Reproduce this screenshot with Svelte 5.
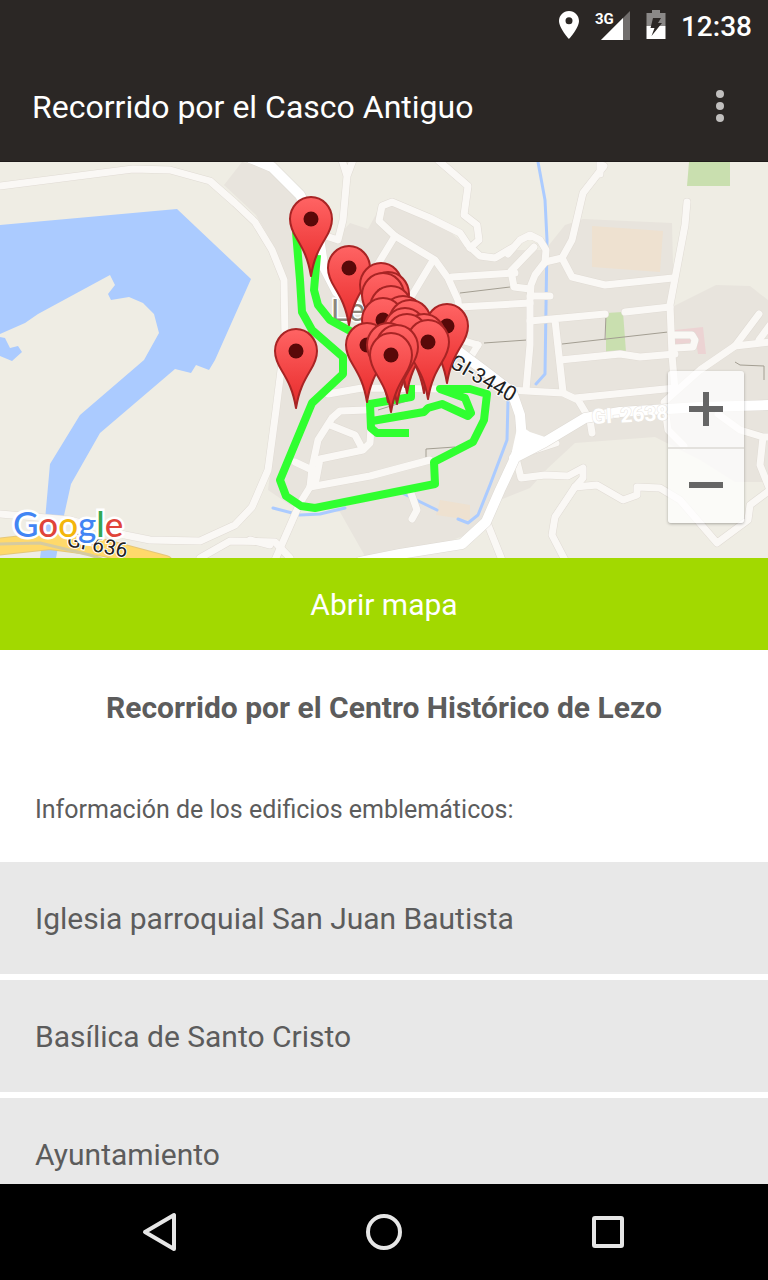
<script lang="ts">
	type Place = { id: number; name: string };

	const places: Place[] = [
		{ id: 1, name: 'Iglesia parroquial San Juan Bautista' },
		{ id: 2, name: 'Basílica de Santo Cristo' },
		{ id: 3, name: 'Ayuntamiento' }
	];

	// centre of each marker head, drawn back to front
	const markers = [
		[311, 219], [349, 268], [381, 285], [388, 294], [383, 295], [391, 308],
		[403, 318], [383, 320], [410, 322], [447, 326], [405, 330], [424, 336],
		[407, 336], [428, 342], [367, 345], [388, 345], [397, 347], [391, 355],
		[296, 351]
	];

	const roads = [
		'M0 186L133 169L170 170L210 181L235 203L255 222L272 250L284 280L285 340L281 370L276 410L268 470L252 507L235 525L200 541L150 540L125 535L70 520L0 514',
		'M290 558L275 542L230 541L200 558',
		'M342 160L347 176L343 220L338 240L326 236M353 160L347 176',
		'M438 160L468 186L464 215L477 225L479 240L470 248',
		'M512 248L495 258L480 256L468 245L460 233L430 218L392 202L382 206L379 221L395 236L435 260L448 278L458 300L461 340L478 345',
		'M395 236L378 264M432 262L408 302M452 277L515 273M460 307L530 303',
		'M478 345L470 358L450 350',
		'M508 254L520 240L530 235L540 240L546 250L545 262L535 275L531 285L530 300L530 345L526 390',
		'M534 247L511 271L514 287L530 289M530 296L550 296',
		'M545 262L562 258L572 240L583 193L604 166M600 174L600 158',
		'M562 258L572 277L605 285L673 278',
		'M687 202L685 225L670 305L672 355L675 390',
		'M530 321L605 314M625 312L670 307M555 320L560 365L563 392',
		'M560 360L620 354L640 357L675 354',
		'M675 335L692 335L695 340L693 347L675 348',
		'M770 342L735 346L700 370L664 402L668 430L684 446',
		'M735 346L759 314M759 340L770 325',
		'M508 390L563 393L578 400L590 420L592 433M575 398L675 388',
		'M516 458L521 478L545 475L568 476L583 468L583 478L575 487L555 517L552 535L565 560',
		'M575 487L597 485L623 500L637 495L637 487L660 488L680 500L717 543L748 520L750 505L770 490L760 465L763 437L740 430L718 414M763 437L770 437',
		'M516 456L556 443',
		'M366 410L340 411L332 418L318 440L312 468L310 487L300 503L275 560',
		'M330 425L355 435L363 450M371 428L370 443L363 450L320 459L316 480',
		'M310 487L370 476L430 460M295 462L312 470M328 394L362 388L440 389',
		'M411 493L417 510L412 519M488 525L502 560M270 545L250 540'
	];

	const highway =
		'M250 158L272 167L300 195L318 230L323 265L337 292L370 315L450 345L490 375L512 392L520 415L522 440L514 460L500 490L486 522L462 544L400 554L360 562M514 458L545 442L585 418L620 412L700 407L770 405';

	const route =
		'M296 232L300 280L302 312L312 330L343 357L343 374L312 403L280 480L286 496L301 506L315 508L435 484L434 462L473 442L484 420L487 394L470 389L440 389L465 398L471 413L468 416L442 404L428 408L424 412L372 421M411 385L411 397L370 404L371 428L377 433L409 433M317 255L314 290L318 305L330 320L352 332';

	let zoom = $state(1);

	function zoomIn() {
		zoom = Math.min(zoom + 1, 4);
	}

	function zoomOut() {
		zoom = Math.max(zoom - 1, 1);
	}
</script>

<div class="screen">
	<div class="status-bar">
		<svg width="20" height="30" viewBox="1 0 20 30" aria-hidden="true">
			<path fill="#fff" fill-rule="evenodd" d="M11 1C5.300 1 1 5.500 1 11C1 18 11 29 11 29S21 18 21 11C21 5.500 16.700 1 11 1ZM11 7.300A3.500 3.500 0 1 1 11 14.300A3.500 3.500 0 1 1 11 7.300Z" />
		</svg>
		<svg class="signal" width="37" height="30" viewBox="0 0 37 30" aria-hidden="true">
			<path fill="#716e6d" d="M36 1V30H7Z" />
			<path fill="#fff" d="M29 8V30H7Z" />
			<text x="1" y="14">3G</text>
		</svg>
		<svg width="20" height="30" viewBox="0 0 20 30" aria-hidden="true">
			<path fill="#8b8988" d="M6 0H14V3H19.500V16H0.500V3H6Z" />
			<path fill="#fff" d="M0.500 16H19.500V29H0.500Z" />
			<path fill="#2b2725" d="M7 8H15L12 13H16L5.500 26L8.500 18H4.500Z" />
		</svg>
		<time>12:38</time>
	</div>

	<header>
		<h1>Recorrido por el Casco Antiguo</h1>
		<button class="menu" aria-label="Más opciones">
			<svg width="10" height="34" viewBox="0 0 10 34">
				<circle cx="5" cy="5" r="4" />
				<circle cx="5" cy="17" r="4" />
				<circle cx="5" cy="29" r="4" />
			</svg>
		</button>
	</header>

	<main>
		<div class="map">
			<svg class="map-canvas" viewBox="0 162 768 396" preserveAspectRatio="xMidYMid slice" style:transform="scale({zoom})">
				<defs>
					<linearGradient id="pin-fill" x1="0" y1="0" x2="0" y2="1">
						<stop offset="0" stop-color="#ff6464" />
						<stop offset="0.700" stop-color="#ef3b3b" />
						<stop offset="1" stop-color="#e02c2c" />
					</linearGradient>
				</defs>
				<rect y="162" width="768" height="396" fill="#efede4" />

				<!-- built-up areas -->
				<path fill="#e8e4dd" d="M242 162L224 185L256 215L276 250L286 300L282 380L268 490L290 505L340 512L366 558L430 548L480 530L500 500L530 488L548 468L575 443L655 437L700 460L735 482L768 482V300L750 286L716 285L674 306L672 223L583 219L565 225L545 250L510 250L490 258L470 250L440 222L400 203L380 207L368 229L350 223L335 240L300 195L270 170Z" />
				<path fill="#eee1d0" d="M592 226L663 231L660 272L592 267ZM440 500L470 505L470 520L436 515Z" />
				<path fill="#c9dfaf" d="M689 162H730V186H687ZM606 313L623 312L626 352L606 354Z" />
				<path fill="#ecd3d3" d="M675 330L703 327L706 354L698 354L696 342L675 345Z" />

				<!-- water -->
				<path fill="#abcbff" d="M0 225L177 209L251 279L215 360L209 370L196 365L191 373L175 369L100 433L71 484L63 520L56 558H40L45 520L50 464L80 415L144 360L159 333L154 314L143 303L129 297L111 300L108 294L115 285L110 275L38 314L25 323L0 334ZM0 337L5 338L10 348L18 346L22 352L12 361L0 356Z" />
				<path class="stream" d="M538 162L545 200L547 240L545 374L536 384M508 400L507 440L490 485L478 515L468 523L458 519M273 508L300 515L320 514L345 508M400 492L437 510" />

				<path class="footpath" d="M460 293L510 287M484 343L527 340M562 344L668 332M606 314L605 340M378 410L410 400M426 458V449L455 447M735 362L740 365L764 366V380" />

				{#each roads as road}
					<path class="road-edge" d={road} />
				{/each}
				{#each roads as road}
					<path class="road" d={road} />
				{/each}
				<path class="highway-edge" d={highway} />
				<path class="highway" d={highway} />
				<path fill="#fff" d="M518 424L530 432L545 437L536 450L510 460Z" />

				<path class="motorway-edge" d="M-5 547L50 541L105 548L165 564" />
				<path class="motorway" d="M-5 547L50 541L105 548L165 564" />
				<path fill="none" stroke="#d6cba0" stroke-width="3" d="M0 544L40 543L90 555L110 562" />

				<text class="town" x="331" y="321">Lezo</text>
				<text class="road-label white" x="592" y="424" transform="rotate(-3 592 424)">GI-2638</text>
				<text class="road-label" x="448" y="366" transform="rotate(30 448 366)">GI-3440</text>
				<text class="road-label" x="66" y="546" transform="rotate(11 66 546)">GI-636</text>

				<path class="route" d={route} />

				{#each markers as [x, y]}
					<g transform="translate({x} {y})">
						<path class="pin" d="M0 57C-3 39 -8 30 -14 20C-19 12 -21 7 -21 0A21 22 0 1 1 21 0C21 7 19 12 14 20C8 30 3 39 0 57Z" />
						<circle r="7.500" fill="#590909" />
					</g>
				{/each}
			</svg>

			<div class="google">
				<span class="blue">G</span><span class="red">o</span><span class="yellow">o</span><span class="blue">g</span><span class="green">l</span><span class="red">e</span>
			</div>

			<div class="zoom">
				<button aria-label="Acercar" onclick={zoomIn}>
					<svg width="34" height="34" viewBox="0 0 34 34"><path d="M14 0H20V14H34V20H20V34H14V20H0V14H14Z" /></svg>
				</button>
				<button aria-label="Alejar" onclick={zoomOut}>
					<svg width="34" height="34" viewBox="0 0 34 34"><path d="M0 14H34V20H0Z" /></svg>
				</button>
			</div>
		</div>

		<button class="open-map">Abrir mapa</button>

		<h2>Recorrido por el Centro Histórico de Lezo</h2>
		<p>Información de los edificios emblemáticos:</p>

		<ul>
			{#each places as place (place.id)}
				<li><button class="place">{place.name}</button></li>
			{/each}
		</ul>
	</main>

	<nav aria-label="Sistema">
		<button aria-label="Atrás">
			<svg width="40" height="40" viewBox="0 0 40 40"><path d="M34 3V37L5 20Z" /></svg>
		</button>
		<button aria-label="Inicio">
			<svg width="40" height="40" viewBox="0 0 40 40"><circle cx="20" cy="20" r="16" /></svg>
		</button>
		<button aria-label="Recientes">
			<svg width="40" height="40" viewBox="0 0 40 40"><rect x="6" y="6" width="28" height="28" rx="1" /></svg>
		</button>
	</nav>
</div>

<style>
	:global(body) {
		margin: 0;
	}

	.screen {
		display: flex;
		flex-direction: column;
		height: 100vh;
		font-family: Roboto, 'Liberation Sans', sans-serif;
		color: #5c5c5c;
		background-color: white;
	}

	button {
		padding: 0;
		border: none;
		background: none;
		font-family: inherit;
		color: inherit;
		cursor: pointer;
	}

	svg {
		display: block;
	}

	.status-bar {
		display: flex;
		flex-shrink: 0;
		justify-content: flex-end;
		align-items: center;
		gap: 15px;
		height: 50px;
		padding: 0 16px;
		background-color: #2b2725;
		color: white;
	}

	.signal {
		overflow: visible;
	}

	.signal text {
		font-size: 15px;
		font-weight: 700;
		fill: white;
		stroke: #2b2725;
		stroke-width: 2px;
		paint-order: stroke;
	}

	time {
		padding-top: 4px;
		font-size: 28px;
		font-weight: 500;
		line-height: 32px;
	}

	header {
		display: flex;
		flex-shrink: 0;
		justify-content: space-between;
		align-items: center;
		height: 112px;
		padding: 0 32px;
		box-sizing: border-box;
		border-bottom: 1px solid #1f1b1a;
		background-color: #2b2725;
		color: white;
	}

	h1 {
		margin: 0;
		padding-top: 2px;
		font-size: 32px;
		font-weight: 400;
		line-height: 40px;
	}

	.menu {
		display: flex;
		justify-content: center;
		width: 32px;
		fill: #c1bfbe;
	}

	main {
		flex: 1;
		min-height: 0;
		overflow: hidden;
	}

	.map {
		position: relative;
		height: 396px;
		overflow: hidden;
	}

	.map-canvas {
		width: 100%;
		height: 100%;
	}

	.map-canvas path {
		stroke-linejoin: round;
	}

	.road-edge,
	.road,
	.highway-edge,
	.highway,
	.motorway-edge,
	.motorway,
	.stream,
	.route {
		fill: none;
		stroke-linecap: round;
	}

	.road-edge {
		stroke: #e0dbd4;
		stroke-width: 8px;
	}

	.road {
		stroke: #faf8f5;
		stroke-width: 7px;
	}

	.highway-edge {
		stroke: #dedad4;
		stroke-width: 11px;
	}

	.highway {
		stroke: white;
		stroke-width: 10px;
	}

	.motorway-edge {
		stroke: #e5c77a;
		stroke-width: 18px;
	}

	.motorway {
		stroke: #ffd96b;
		stroke-width: 16px;
	}

	.stream {
		stroke: #abcbff;
		stroke-width: 3px;
	}

	.footpath {
		fill: none;
		stroke: #a39e92;
		stroke-width: 1px;
	}

	.route {
		stroke: #30ff30;
		stroke-width: 8px;
	}

	.map-canvas .route {
		stroke-linecap: butt;
	}

	.pin {
		fill: url(#pin-fill);
		stroke: #a82424;
		stroke-width: 2px;
	}

	.town {
		font-size: 32px;
		fill: #8c877b;
		stroke: white;
		stroke-width: 3px;
		paint-order: stroke;
	}

	.road-label {
		font-size: 21px;
		fill: #222;
		stroke: white;
		stroke-width: 2px;
		paint-order: stroke;
	}

	.road-label.white {
		font-weight: 700;
		fill: white;
		stroke: #e8e4dd;
		stroke-width: 1px;
	}

	.google {
		position: absolute;
		left: 13px;
		bottom: 13px;
		font-family: Lato, Roboto, sans-serif;
		font-size: 35px;
		font-weight: 500;
		line-height: 44px;
		-webkit-text-stroke: 5px white;
		paint-order: stroke;
	}

	.blue {
		color: #4285f4;
	}

	.red {
		color: #e0443a;
	}

	.yellow {
		color: #f4b60b;
	}

	.green {
		color: #34a853;
	}

	.zoom {
		position: absolute;
		right: 24px;
		bottom: 35px;
		display: flex;
		flex-direction: column;
		border-radius: 3px;
		background-color: rgba(255, 255, 255, 0.75);
		box-shadow: 0 1px 3px rgba(0, 0, 0, 0.3);
	}

	.zoom button {
		display: flex;
		justify-content: center;
		align-items: center;
		width: 76px;
		height: 76px;
		fill: #666;
	}

	.zoom button + button {
		box-shadow: inset 0 2px #e3e1dd;
	}

	.open-map {
		display: block;
		width: 100%;
		height: 92px;
		padding-top: 2px;
		background-color: #a2d900;
		color: white;
		font-size: 30px;
		line-height: 40px;
	}

	h2 {
		margin: 0;
		padding: 38px 24px 36px;
		font-size: 30px;
		font-weight: 700;
		line-height: 40px;
		text-align: center;
	}

	p {
		margin: 0;
		padding: 30px 35px 36px;
		font-size: 25px;
		line-height: 32px;
	}

	ul {
		display: flex;
		flex-direction: column;
		gap: 6px;
		margin: 0;
		padding: 0;
		list-style: none;
	}

	.place {
		display: block;
		width: 100%;
		height: 112px;
		padding: 2px 35px 0;
		background-color: #e8e8e8;
		font-size: 30px;
		line-height: 40px;
		text-align: left;
	}

	nav {
		display: flex;
		flex-shrink: 0;
		justify-content: center;
		height: 96px;
		background-color: black;
	}

	nav button {
		display: flex;
		justify-content: center;
		align-items: center;
		width: 224px;
	}

	nav svg {
		fill: none;
		stroke: #e6e6e6;
		stroke-width: 4px;
		stroke-linejoin: round;
	}
</style>
